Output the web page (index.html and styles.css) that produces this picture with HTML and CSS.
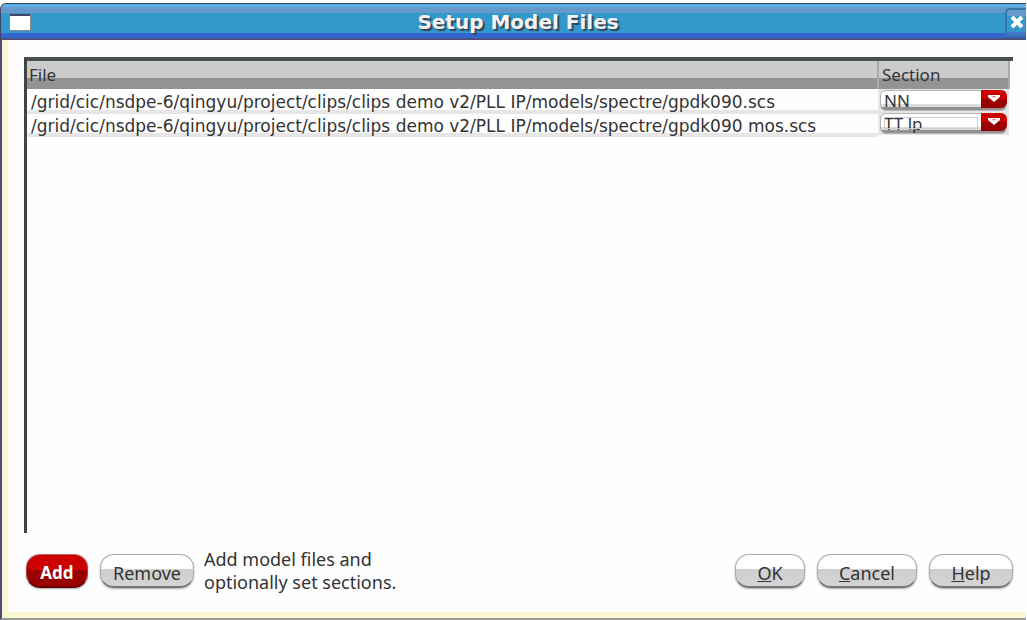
FILE: index.html
```html
<!DOCTYPE html>
<html lang="en">
<head>
<meta charset="utf-8">
<title>Setup Model Files</title>
<link rel="stylesheet" href="styles.css">
</head>
<body>
<div class="window">
  <header class="titlebar">
    <button class="menu-button" type="button" aria-label="Window menu"></button>
    <h1 class="title">Setup Model Files</h1>
    <button class="close-button" type="button" aria-label="Close">
      <svg width="14" height="14" viewBox="0 0 14 14"><path d="M2 2L12 12M12 2L2 12" stroke="#fff" stroke-width="4" fill="none"/></svg>
    </button>
  </header>
  <main class="content">
    <div class="list">
      <table class="files">
        <thead>
          <tr><th class="file-col">File</th><th class="section-col">Section</th></tr>
        </thead>
        <tbody>
          <tr>
            <td><span class="path">/grid/cic/nsdpe-6/qingyu/project/clips/clips demo v2/PLL IP/models/spectre/gpdk090.scs</span></td>
            <td class="section-cell"><div class="combo"><select aria-label="Section for gpdk090.scs"><option>NN</option></select><svg class="arrow" viewBox="0 0 26 18"><path d="M7 5H19V7L13 12L7 7Z" fill="#fff"/><path d="M11 6H15L13 8Z" fill="#e66"/></svg></div></td>
          </tr>
          <tr>
            <td><span class="path">/grid/cic/nsdpe-6/qingyu/project/clips/clips demo v2/PLL IP/models/spectre/gpdk090 mos.scs</span></td>
            <td class="section-cell"><div class="combo focused"><select aria-label="Section for gpdk090 mos.scs"><option>TT lp</option></select><svg class="arrow" viewBox="0 0 26 18"><path d="M7 5H19V7L13 12L7 7Z" fill="#fff"/><path d="M11 6H15L13 8Z" fill="#e66"/></svg></div></td>
          </tr>
        </tbody>
      </table>
    </div>
    <footer class="actions">
      <button class="btn primary" type="button">Add</button>
      <button class="btn remove" type="button">Remove</button>
      <p class="hint">Add model files and<br>optionally set sections.</p>
      <button class="btn ok" type="button"><u>O</u>K</button>
      <button class="btn cancel" type="button"><u>C</u>ancel</button>
      <button class="btn help" type="button"><u>H</u>elp</button>
    </footer>
  </main>
</div>
</body>
</html>
```
FILE: styles.css
```css
* { box-sizing: border-box; }
body {
  margin: 0;
  background: #fefefe;
  font-family: "Noto Sans", "Open Sans", sans-serif;
  font-size: 17px;
  color: #333;
}
button, select { font: inherit; color: inherit; margin: 0; padding: 0; border: 0; }
.window {
  display: flex;
  flex-direction: column;
  min-height: 100vh;
  padding-top: 3px;
  margin-right: 1px;
}
.titlebar {
  display: flex;
  align-items: center;
  height: 37px;
  padding-left: 8px;
  border-left: 1px solid #446;
  border-top: 1px solid #345;
  border-radius: 6px 0 0 0;
  background: linear-gradient(#5ab2e6 3px, #6699cc 3px, #6699cc 9px, #3399cc 9px, #3399cc 29px, #3366cc 29px, #3366cc 34px, #4c5080 34px);
}
.menu-button {
  width: 22px;
  height: 17px;
  background: #fff;
  border: 1px solid #888;
  border-top: 2px solid #446;
  border-radius: 2px;
}
.title {
  flex: 1;
  margin: 0;
  text-align: center;
  font: bold 20px/24px "DejaVu Sans", sans-serif;
  color: #f4f4f4;
  text-shadow: 2px 2px 1px #345;
}
.close-button {
  display: flex;
  align-items: center;
  justify-content: center;
  width: 21px;
  height: 29px;
  border: 2px solid #3377aa;
  border-right: 0;
  border-radius: 5px 0 0 5px;
  background: linear-gradient(#6699cc 6px, #3399cc 6px, #3399cc 22px, #4477cc 22px);
}
.content {
  flex: 1;
  display: flex;
  flex-direction: column;
  padding: 17px 13px 24px 16px;
  border-left: 2px solid #4c4c80;
  border-bottom: 2px solid #999;
  box-shadow: inset 6px 0 #fbf8d0, inset 0 -6px #fbf8d0;
}
.list {
  flex: 1;
  margin-left: 6px;
  border-top: 4px solid #4a504a;
  border-left: 3px solid #404442;
}
.files {
  width: calc(100% - 3px);
  border-collapse: collapse;
  table-layout: fixed;
}
.files th {
  height: 28px;
  padding: 0 3px;
  text-align: left;
  font-weight: normal;
  line-height: 26px;
  background: linear-gradient(#cbcbcb 17px, #939393 17px);
}
.files .file-col { padding-left: 2px; }
.files .section-col { width: 131px; border-left: 2px solid #aaa; border-right: 2px solid #aaa; }
.files td {
  height: 23px;
  padding: 0 4px;
  border-bottom: 4px solid #e6e6e6;
  white-space: nowrap;
}
.path {
  display: block;
  height: 19px;
  line-height: 24px;
  font-family: "DejaVu Sans", sans-serif;
}
.files .section-cell { padding: 0 2px; background: #e6e6e6; border: 0; }
.combo { position: relative; height: 21px; }
.combo select {
  appearance: none;
  display: block;
  width: 100%;
  height: 21px;
  padding: 0 30px 0 3px;
  line-height: 20px;
  border: 1px solid #b5b5b5;
  border-radius: 6px;
  background: linear-gradient(#fff 13px, #ddd 13px, #ddd 16px, #929292 16px);
}
.combo.focused::after {
  content: "";
  position: absolute;
  inset: 4px 29px 5px 4px;
  border: 1px solid #ccc;
  pointer-events: none;
}
.arrow {
  position: absolute;
  right: 0;
  top: 0;
  width: 26px;
  height: 18px;
  border-radius: 0 6px 6px 0;
  background: linear-gradient(#c00 9px, #900 9px);
  pointer-events: none;
}
.actions { display: flex; align-items: center; padding: 15px 0 0 8px; font-size: 18px; }
.btn {
  height: 34px;
  padding-top: 4px;
  border: 1px solid #aaa;
  border-bottom: 2px solid #777;
  border-radius: 14px;
  background: linear-gradient(#fff 14px, #cfcfcf 14px, #d4d4d4);
  box-shadow: 0 1px 2px #aaa;
  line-height: 24px;
}
.primary {
  width: 62px;
  border-color: #b66 #944 #600;
  background: linear-gradient(#c00 15px, #900 15px);
  color: #fff;
  font-size: 17px;
  font-weight: bold;
}
.remove { width: 94px; margin-left: 12px; }
.hint { flex: 1; margin: 0 0 0 10px; line-height: 23px; }
.ok { width: 70px; }
.cancel { width: 100px; margin-left: 12px; }
.help { width: 84px; margin-left: 12px; }
```
